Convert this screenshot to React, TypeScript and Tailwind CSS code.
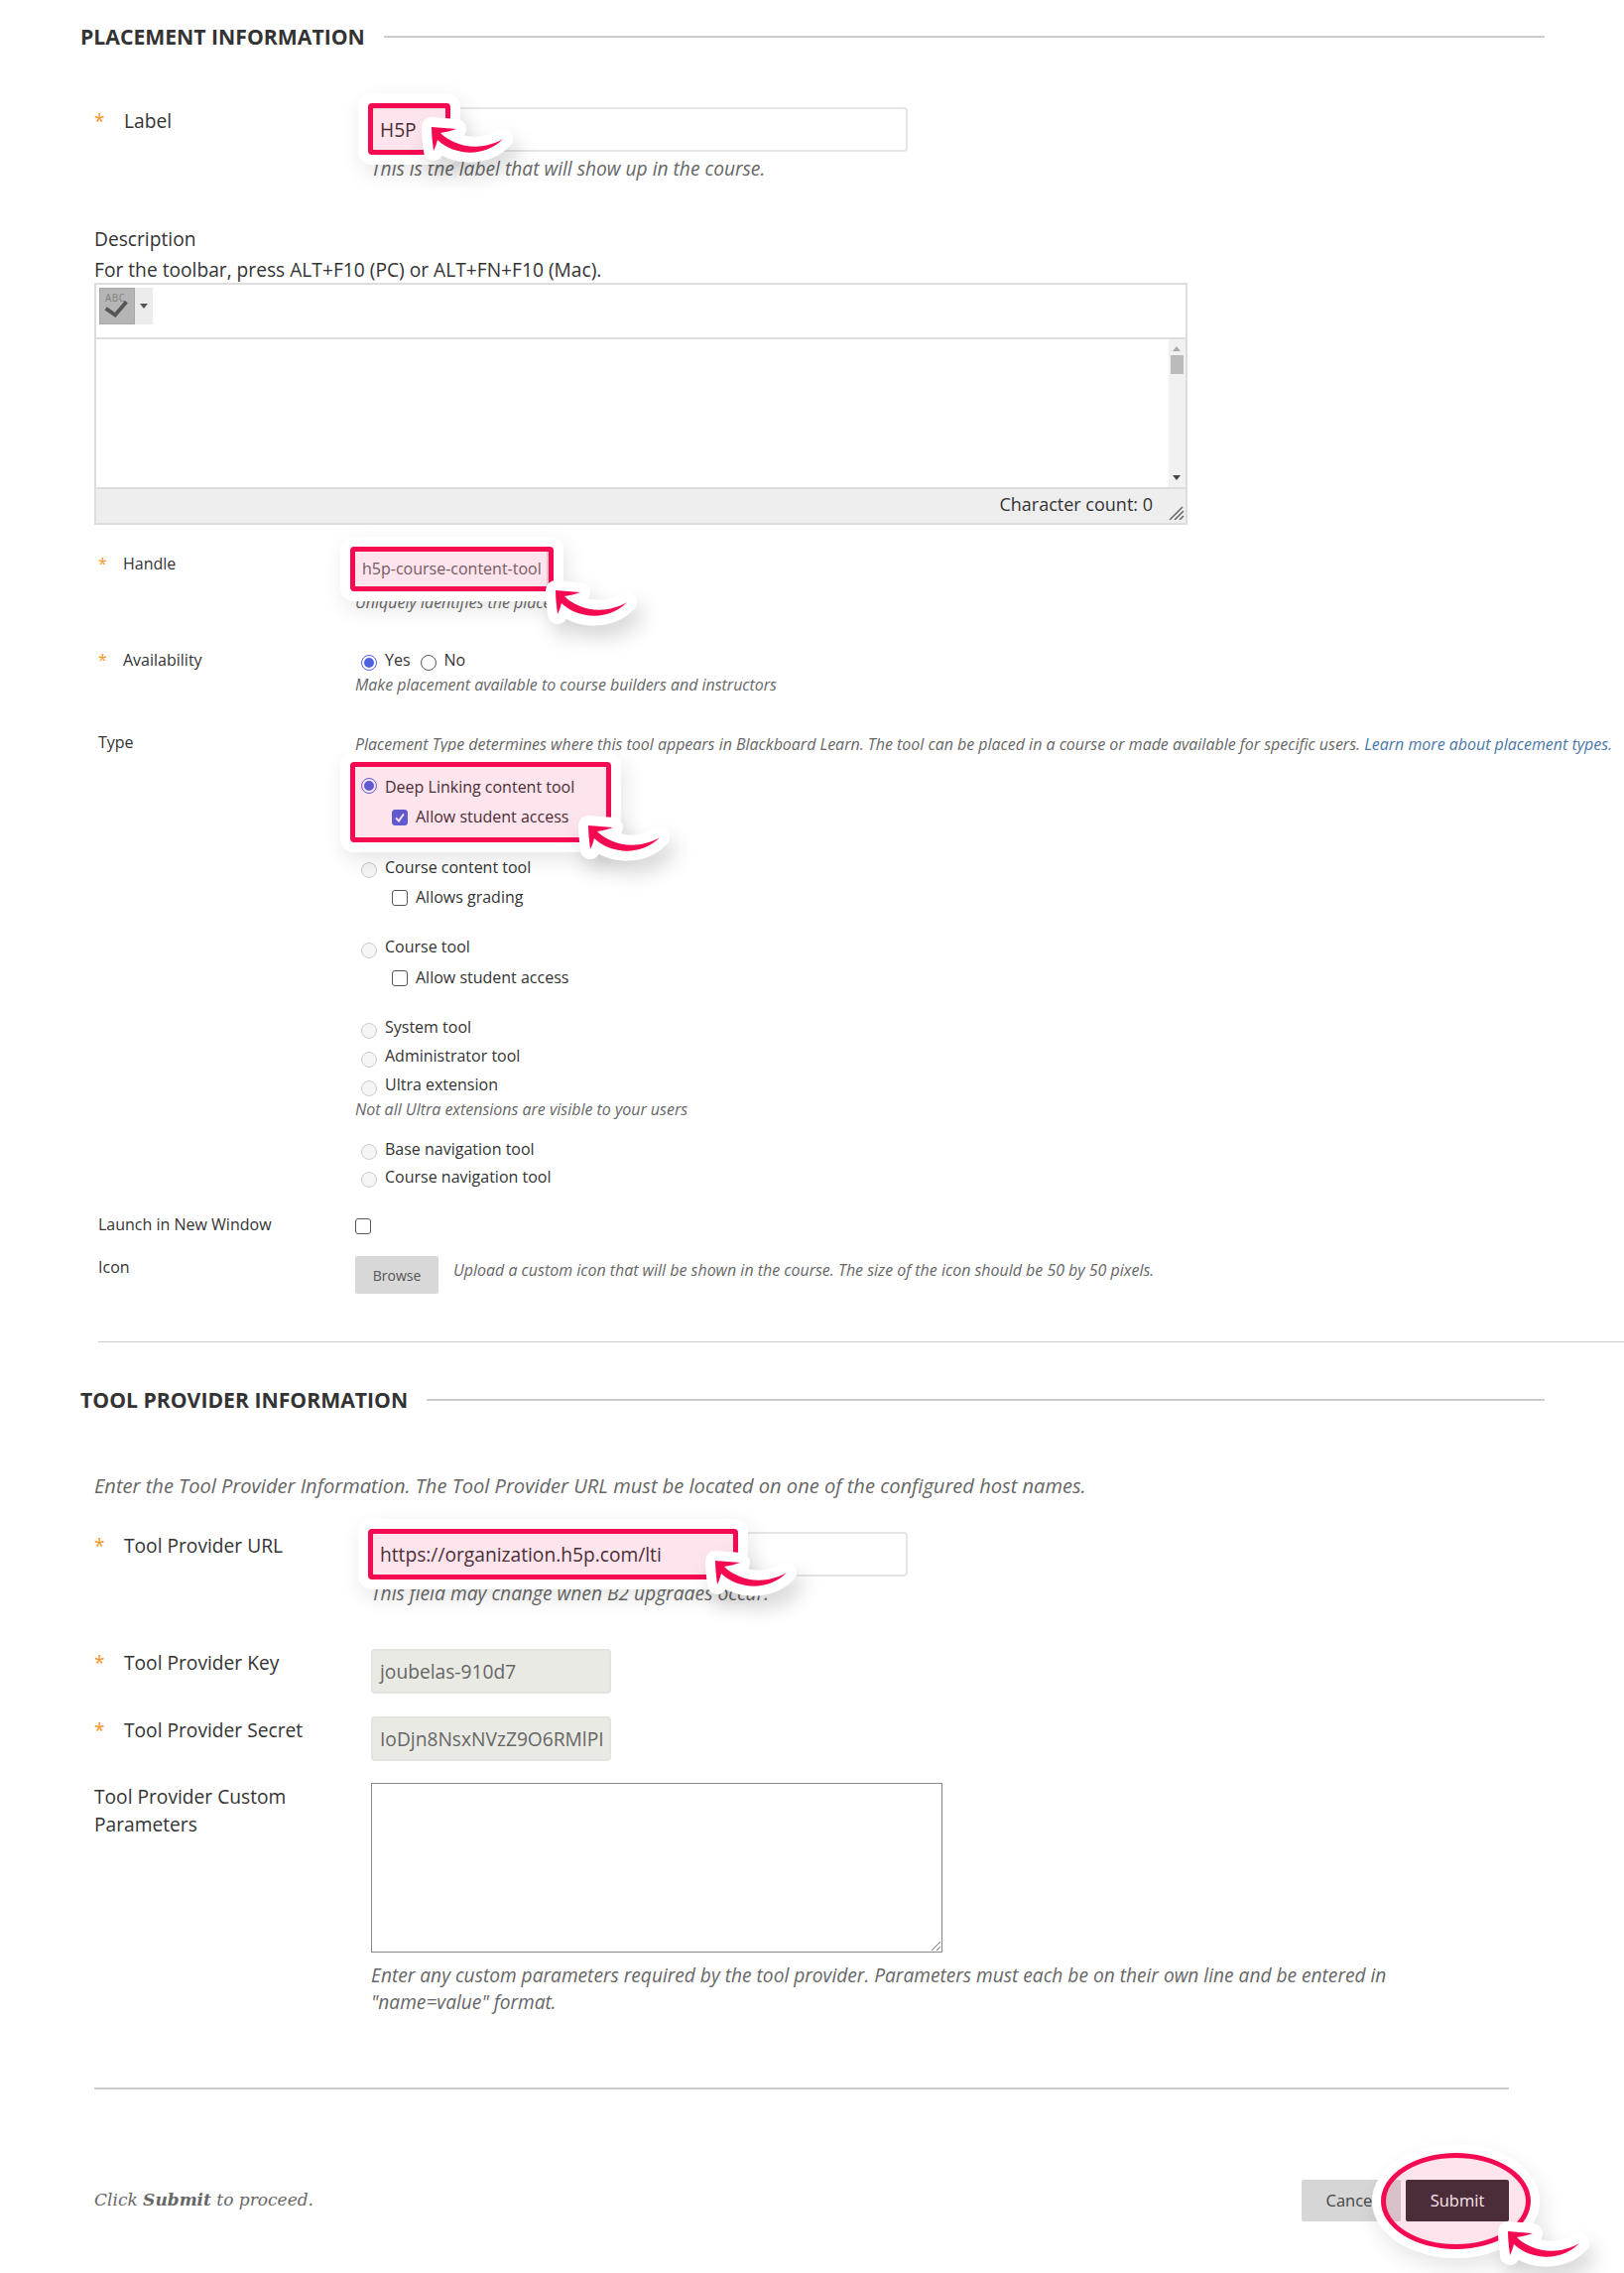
import React from 'react';

const RED = '#f50a52';

const Star = () => <span className="text-[#f7941d]">*</span>;

// callout arrow, its origin is the arrow tip
const Arrow = ({ className }: { className: string }) => {
  const d = 'M0 0 L25 2 C20 4 14 5 9 6 C22 19 48 26 72 12 C55 30 24 30 6 13 C5 17 4 20 2 24 C1 16 0 8 0 0 Z';
  return (
    <svg
      viewBox="0 0 72 28"
      className={`absolute w-[72px] h-[28px] overflow-visible drop-shadow-[6px_12px_10px_rgba(0,0,0,0.16)] ${className}`}
    >
      <path d={d} fill="#fff" stroke="#fff" strokeWidth="20" strokeLinejoin="round" />
      <path d={d} fill={RED} />
    </svg>
  );
};

// white halo + red frame with a see-through pink fill
const Callout = ({ className }: { className: string }) => (
  <div className={`absolute box-border border-[10px] border-white rounded-[14px] shadow-[4px_8px_22px_rgba(0,0,0,0.1)] ${className}`}>
    <div className="h-full box-border rounded-[4px] border-[5px] border-[#f50a52] bg-[#f50a52]/11" />
  </div>
);

const Heading = ({ children, className }: { children: React.ReactNode; className: string }) => (
  <div className={`flex items-center h-[28px] pl-[81px] pr-[80px] gap-[19px] ${className}`}>
    <h2 className="text-[21.2px] font-bold text-[#333] uppercase whitespace-nowrap">{children}</h2>
    <div className="flex-1 h-[2px] bg-[#ccc]" />
  </div>
);

const BigRow = ({ label, required, children, className }: { label: React.ReactNode; required?: boolean; children: React.ReactNode; className: string }) => (
  <div className={`flex pl-[95px] ${className}`}>
    <div className="w-[279px] shrink-0 flex text-[19.2px] leading-[28px] text-[#333]">
      {required && <span className="w-[30px]"><Star /></span>}
      <span>{label}</span>
    </div>
    <div>{children}</div>
  </div>
);

const SmallRow = ({ label, required, children, className, labelClass = '' }: { label: string; required?: boolean; children: React.ReactNode; className: string; labelClass?: string }) => (
  <div className={`flex pl-[99px] ${className}`}>
    <div className={`w-[259px] shrink-0 flex text-[16px] leading-[24px] text-[#333] ${labelClass}`}>
      {required && <span className="w-[25px]"><Star /></span>}
      <span>{label}</span>
    </div>
    <div className="flex-1 min-w-0">{children}</div>
  </div>
);

const Help = ({ children, className = '' }: { children: React.ReactNode; className?: string }) => (
  <p className={`text-[15.96px] leading-[22px] italic text-[#666] whitespace-nowrap ${className}`}>{children}</p>
);

const Radio = ({ checked, className = 'mt-[8px]', disabled }: { checked?: boolean; className?: string; disabled?: boolean }) => (
  <span
    className={`w-[16px] h-[16px] shrink-0 rounded-full border flex items-center justify-center ${className} ${
      checked ? 'border-[#4f63e0] bg-white' : disabled ? 'border-[#ccc] bg-[#f5f5f5]' : 'border-[#555] bg-white'
    }`}
  >
    {checked && <span className="w-[10px] h-[10px] rounded-full bg-[#4f63e0]" />}
  </span>
);

const Checkbox = ({ checked, className = '' }: { checked?: boolean; className?: string }) => (
  <span
    className={`w-[16px] h-[16px] shrink-0 rounded-[3px] border flex items-center justify-center ${className} ${
      checked ? 'border-[#4f63e0] bg-[#4f63e0]' : 'border-[#555] bg-white'
    }`}
  >
    {checked && (
      <svg viewBox="0 0 16 16" className="w-[14px] h-[14px]">
        <path d="M3.5 8.5 L6.8 12 L12.5 4" fill="none" stroke="#fff" strokeWidth="2.2" />
      </svg>
    )}
  </span>
);

const Option = ({ label, className, checked, disabled = true, radioClass }: { label: string; className: string; checked?: boolean; disabled?: boolean; radioClass?: string }) => (
  <div className={`flex pl-[6px] gap-[8px] text-[16px] leading-[24px] text-[#333] ${className}`}>
    <Radio checked={checked} disabled={disabled} className={radioClass} />
    <span>{label}</span>
  </div>
);

const SubOption = ({ label, className, checked }: { label: string; className: string; checked?: boolean }) => (
  <div className={`flex items-center pl-[37px] gap-[8px] text-[16px] leading-[24px] text-[#333] ${className}`}>
    <Checkbox checked={checked} className="mt-[2px]" />
    <span>{label}</span>
  </div>
);

const TextInput = ({ value, disabled, className }: { value?: string; disabled?: boolean; className: string }) => (
  <div
    className={`h-[45px] box-border rounded-[4px] border-2 pl-[7px] pt-[2px] flex items-center text-[19.2px] whitespace-nowrap ${
      disabled ? 'bg-[#eaeae5] border-[#e4e4df] text-[#666]' : 'bg-white border-[#e5e5e5] text-[#333]'
    } ${className}`}
  >
    {value}
  </div>
);

const Editor = () => (
  <div className="ml-[95px] w-[1102px] h-[244px] box-border border-2 border-[#ddd] flex flex-col">
    <div className="h-[55px] shrink-0 border-b-2 border-[#ddd] pl-[3px] pt-[3px]">
      <div className="flex w-[54px] h-[37px]">
        <div className="relative w-[36px] h-full bg-[#b5b5b5] border border-[#a8a8a8] overflow-hidden">
          <span className="absolute left-[5px] top-[3px] text-[10px] leading-[12px] tracking-[0.5px] text-[#808080]">ABC</span>
          <svg viewBox="0 0 36 37" className="absolute inset-0 w-full h-full">
            <path d="M6 21 L16 28 L28 14" fill="none" stroke="#555" strokeWidth="4" />
          </svg>
        </div>
        <div className="flex-1 bg-[#ececec] flex items-center justify-center">
          <span className="w-0 h-0 border-x-[4px] border-x-transparent border-t-[5px] border-t-[#555]" />
        </div>
      </div>
    </div>
    <div className="flex-1 flex justify-end">
      <div className="relative w-[17px] h-full bg-[#f1f1f1]">
        <span className="absolute left-[4px] top-[7px] w-0 h-0 border-x-[4px] border-x-transparent border-b-[5px] border-b-[#aaa]" />
        <div className="absolute left-[2px] top-[16px] w-[13px] h-[19px] bg-[#bbb]" />
        <span className="absolute left-[4px] bottom-[7px] w-0 h-0 border-x-[4px] border-x-transparent border-t-[5px] border-t-[#444]" />
      </div>
    </div>
    <div className="h-[36px] shrink-0 box-border border-t-2 border-[#ddd] bg-[#eee] flex items-center justify-end pr-[33px] pb-[3px] relative text-[18px] text-[#333]">
      Character count: 0
      <svg viewBox="0 0 16 14" className="absolute right-[1px] bottom-[3px] w-[16px] h-[14px]">
        <path d="M1 14 L14 1 M6 14 L15 5 M11 14 L15 10" stroke="#666" strokeWidth="1.5" />
      </svg>
    </div>
  </div>
);

export default function App() {
  return (
    <div className="relative w-[1637px] h-[2291px] overflow-hidden bg-white font-['Open_Sans',sans-serif] text-[#333]">
      <Heading className="pt-[23px] box-content">Placement Information</Heading>

      <BigRow label="Label" required className="mt-[57px]">
        <TextInput value="H5P" className="w-[541px]" />
        <p className="mt-[5px] text-[19.2px] leading-[24px] italic text-[#666]">This is the label that will show up in the course.</p>
      </BigRow>

      <div className="mt-[45px] pl-[95px] text-[19.2px] text-[#333]">
        <div className="leading-[28px]">Description</div>
        <div className="mt-[3px] leading-[27px]">For the toolbar, press ALT+F10 (PC) or ALT+FN+F10 (Mac).</div>
      </div>
      <Editor />

      <SmallRow label="Handle" required labelClass="pt-[3px]" className="mt-[24px]">
        <div className="-ml-[2px] w-[197px] h-[40px] box-border border-2 border-[#ddd] pl-[7px] flex items-center text-[16px] text-[#666] whitespace-nowrap">
          h5p-course-content-tool
        </div>
        <Help className="mt-[3px]">Uniquely identifies the placement</Help>
      </SmallRow>

      <SmallRow label="Availability" required className="mt-[35px]">
        <div className="flex pl-[6px] text-[16px] leading-[24px] text-[#333]">
          <Radio checked className="mt-[7px]" />
          <span className="ml-[8px]">Yes</span>
          <Radio className="mt-[7px] ml-[10px]" />
          <span className="ml-[8px]">No</span>
        </div>
        <Help className="mt-[2px]">Make placement available to course builders and instructors</Help>
      </SmallRow>

      <SmallRow label="Type" className="mt-[35px]">
        <Help className="pt-[3px]">
          Placement Type determines where this tool appears in Blackboard Learn. The tool can be placed in a course or made available for specific users.{' '}
          <span className="text-[#4a76a8]">Learn more about placement types.</span>
        </Help>
        <Option label="Deep Linking content tool" checked disabled={false} radioClass="mt-[3px]" className="mt-[20px]" />
        <SubOption label="Allow student access" checked className="mt-[6px]" />
        <Option label="Course content tool" radioClass="mt-[7px]" className="mt-[27px]" />
        <SubOption label="Allows grading" className="mt-[6px]" />
        <Option label="Course tool" className="mt-[26px]" />
        <SubOption label="Allow student access" className="mt-[7px]" />
        <Option label="System tool" className="mt-[26px]" />
        <Option label="Administrator tool" className="mt-[5px]" />
        <Option label="Ultra extension" className="mt-[5px]" />
        <Help className="mt-[2px]">Not all Ultra extensions are visible to your users</Help>
        <Option label="Base navigation tool" radioClass="mt-[7px]" className="mt-[17px]" />
        <Option label="Course navigation tool" radioClass="mt-[7px]" className="mt-[4px]" />
      </SmallRow>

      <SmallRow label="Launch in New Window" className="mt-[24px]">
        <Checkbox className="mt-[6px]" />
      </SmallRow>

      <div className="mt-[20px] pl-[99px] flex">
        <div className="w-[259px] shrink-0 text-[16px] leading-[22px] text-[#333]">Icon</div>
        <div className="w-[84px] h-[38px] rounded-[2px] bg-[#d8d8d8] flex items-center justify-center text-[14px] text-[#555]">Browse</div>
        <Help className="ml-[15px] mt-[3px]">Upload a custom icon that will be shown in the course. The size of the icon should be 50 by 50 pixels.</Help>
      </div>

      <div className="mt-[48px] ml-[99px] border-t border-[#ccc]" />

      <Heading className="mt-[44px]">Tool Provider Information</Heading>

      <p className="mt-[59px] pl-[95px] text-[20.08px] leading-[28px] italic text-[#666]">
        Enter the Tool Provider Information. The Tool Provider URL must be located on one of the configured host names.
      </p>

      <BigRow label="Tool Provider URL" required className="mt-[32px]">
        <TextInput value="https://organization.h5p.com/lti" className="w-[541px]" />
        <p className="mt-[5px] mb-[1px] text-[19.2px] leading-[24px] italic text-[#666]">This field may change when B2 upgrades occur.</p>
      </BigRow>
      <BigRow label="Tool Provider Key" required className="mt-[43px]">
        <TextInput value="joubelas-910d7" disabled className="w-[242px]" />
      </BigRow>
      <BigRow label="Tool Provider Secret" required className="mt-[23px]">
        <TextInput value="IoDjn8NsxNVzZ9O6RMlPI" disabled className="w-[242px]" />
      </BigRow>
      <BigRow
        label={
          <>
            Tool Provider Custom
            <br />
            Parameters
          </>
        }
        className="mt-[22px]"
      >
        <div className="relative w-[576px] h-[171px] border border-[#888]">
          <svg viewBox="0 0 10 10" className="absolute right-[1px] bottom-[1px] w-[10px] h-[10px]">
            <path d="M1 10 L10 1 M6 10 L10 6" stroke="#777" strokeWidth="1" />
          </svg>
        </div>
        <p className="mt-[10px] w-[1040px] text-[19.15px] leading-[27px] italic text-[#666]">
          Enter any custom parameters required by the tool provider. Parameters must each be on their own line and be entered in "name=value" format.
        </p>
      </BigRow>

      <div className="mt-[72px] ml-[95px] w-[1426px] border-t-2 border-[#ccc]" />

      <div className="mt-[91px] ml-[95px] w-[1426px] flex items-center">
        <p className="font-['DejaVu_Serif',serif] italic text-[17px] text-[#666]">
          Click <b>Submit</b> to proceed.
        </p>
        <button className="ml-auto w-[100px] h-[42px] rounded-[2px] bg-[#d6d6d6] text-[16.5px] text-[#444]">Cancel</button>
        <button className="ml-[5px] w-[104px] h-[42px] rounded-[2px] bg-[#353235] text-[16.5px] font-medium text-white">Submit</button>
      </div>

      {/* annotations drawn over the form */}
      <Callout className="left-[361px] top-[94px] w-[103px] h-[72px]" />
      <Arrow className="left-[435px] top-[128px]" />
      <Callout className="left-[343px] top-[541px] w-[225px] h-[65px]" />
      <Arrow className="left-[560px] top-[595px]" />
      <Callout className="left-[343px] top-[758px] w-[283px] h-[101px]" />
      <Arrow className="left-[593px] top-[832px]" />
      <Callout className="left-[361px] top-[1531px] w-[393px] h-[71px]" />
      <Arrow className="left-[721px] top-[1573px]" />
      <div className="absolute left-[1383px] top-[2161px] w-[169px] h-[115px] box-border rounded-[50%] border-[9px] border-white shadow-[4px_10px_22px_rgba(0,0,0,0.1)]">
        <div className="h-full box-border rounded-[50%] border-[5px] border-[#f50a52] bg-[#f50a52]/11" />
      </div>
      <Arrow className="left-[1520px] top-[2249px]" />
    </div>
  );
}
